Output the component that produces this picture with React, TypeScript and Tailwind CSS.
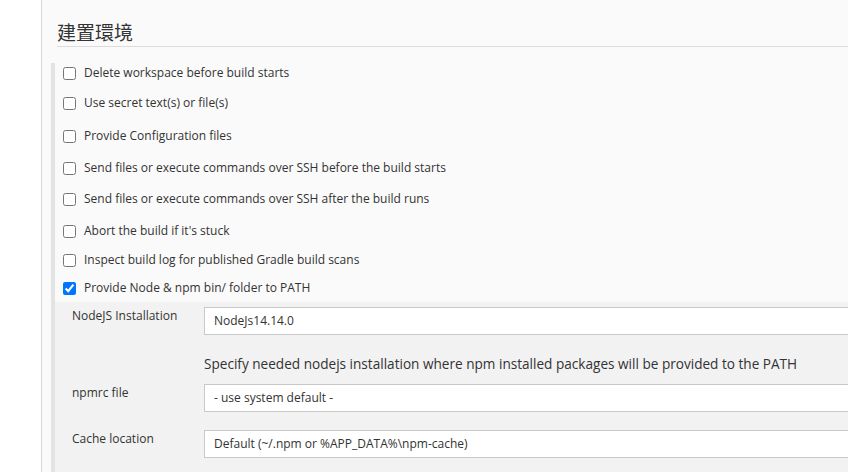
import React from "react";

const options: { label: string; checked?: boolean; mt: string }[] = [
    { label: "Delete workspace before build starts", mt: "mt-[5px]" },
    { label: "Use secret text(s) or file(s)", mt: "mt-[10px]" },
    { label: "Provide Configuration files", mt: "mt-[13px]" },
    { label: "Send files or execute commands over SSH before the build starts", mt: "mt-[12px]" },
    { label: "Send files or execute commands over SSH after the build runs", mt: "mt-[11px]" },
    { label: "Abort the build if it's stuck", mt: "mt-[12px]" },
    { label: "Inspect build log for published Gradle build scans", mt: "mt-[9px]" },
    { label: "Provide Node & npm bin/ folder to PATH", checked: true, mt: "mt-[8px]" },
];

function Field({ label, value, className = "" }: { label: string; value: string; className?: string }) {
    return (
        <div className={`flex items-start ${className}`}>
            <label className="w-[132px] shrink-0 leading-[18px] text-[12px] text-[#333]">{label}</label>
            <div className="w-[680px] shrink-0 h-[28px] bg-white border border-[#c9c9c9] pl-[9px] flex items-center text-[12px] text-[#333]">
                {value}
            </div>
        </div>
    );
}

export default function App() {
    return (
        <div
            className="w-[848px] h-[472px] overflow-hidden flex bg-white"
            style={{ fontFamily: '"Open Sans", "Noto Sans CJK TC", sans-serif' }}
        >
            <div className="w-[42px] shrink-0 bg-white border-r border-[#d6d6d6]" />
            <div className="flex-1 min-w-0 bg-[#fafafa] pl-[9px]">
                <div className="ml-[6px] pt-[20px] border-b border-[#dcdcdc]">
                    <h3 className="text-[19px] leading-[26px] text-[#333] font-normal">建置環境</h3>
                </div>
                <div className="mt-[16px] border-l-[4px] border-[#e3e3e3] pb-[40px]">
                    {options.map((o) => (
                        <div key={o.label} className={`flex items-center h-[20px] pl-[8px] ${o.mt}`}>
                            <input
                                type="checkbox"
                                defaultChecked={o.checked}
                                className="m-0 w-[13px] h-[13px] shrink-0"
                            />
                            <span className="ml-[8px] text-[12px] text-[#333] whitespace-nowrap">{o.label}</span>
                        </div>
                    ))}
                    <div className="mt-[4px] bg-[#f2f2f2] pl-[17px] pt-[5px] pb-[20px]">
                        <Field label="NodeJS Installation" value="NodeJs14.14.0" />
                        <div className="ml-[132px] mt-[19px] leading-[20px] text-[13.6px] text-[#333] whitespace-nowrap">
                            Specify needed nodejs installation where npm installed packages will be provided to the PATH
                        </div>
                        <Field className="mt-[10px]" label="npmrc file" value="- use system default -" />
                        <Field className="mt-[18px]" label="Cache location" value="Default (~/.npm or %APP_DATA%\npm-cache)" />
                    </div>
                </div>
            </div>
        </div>
    );
}
